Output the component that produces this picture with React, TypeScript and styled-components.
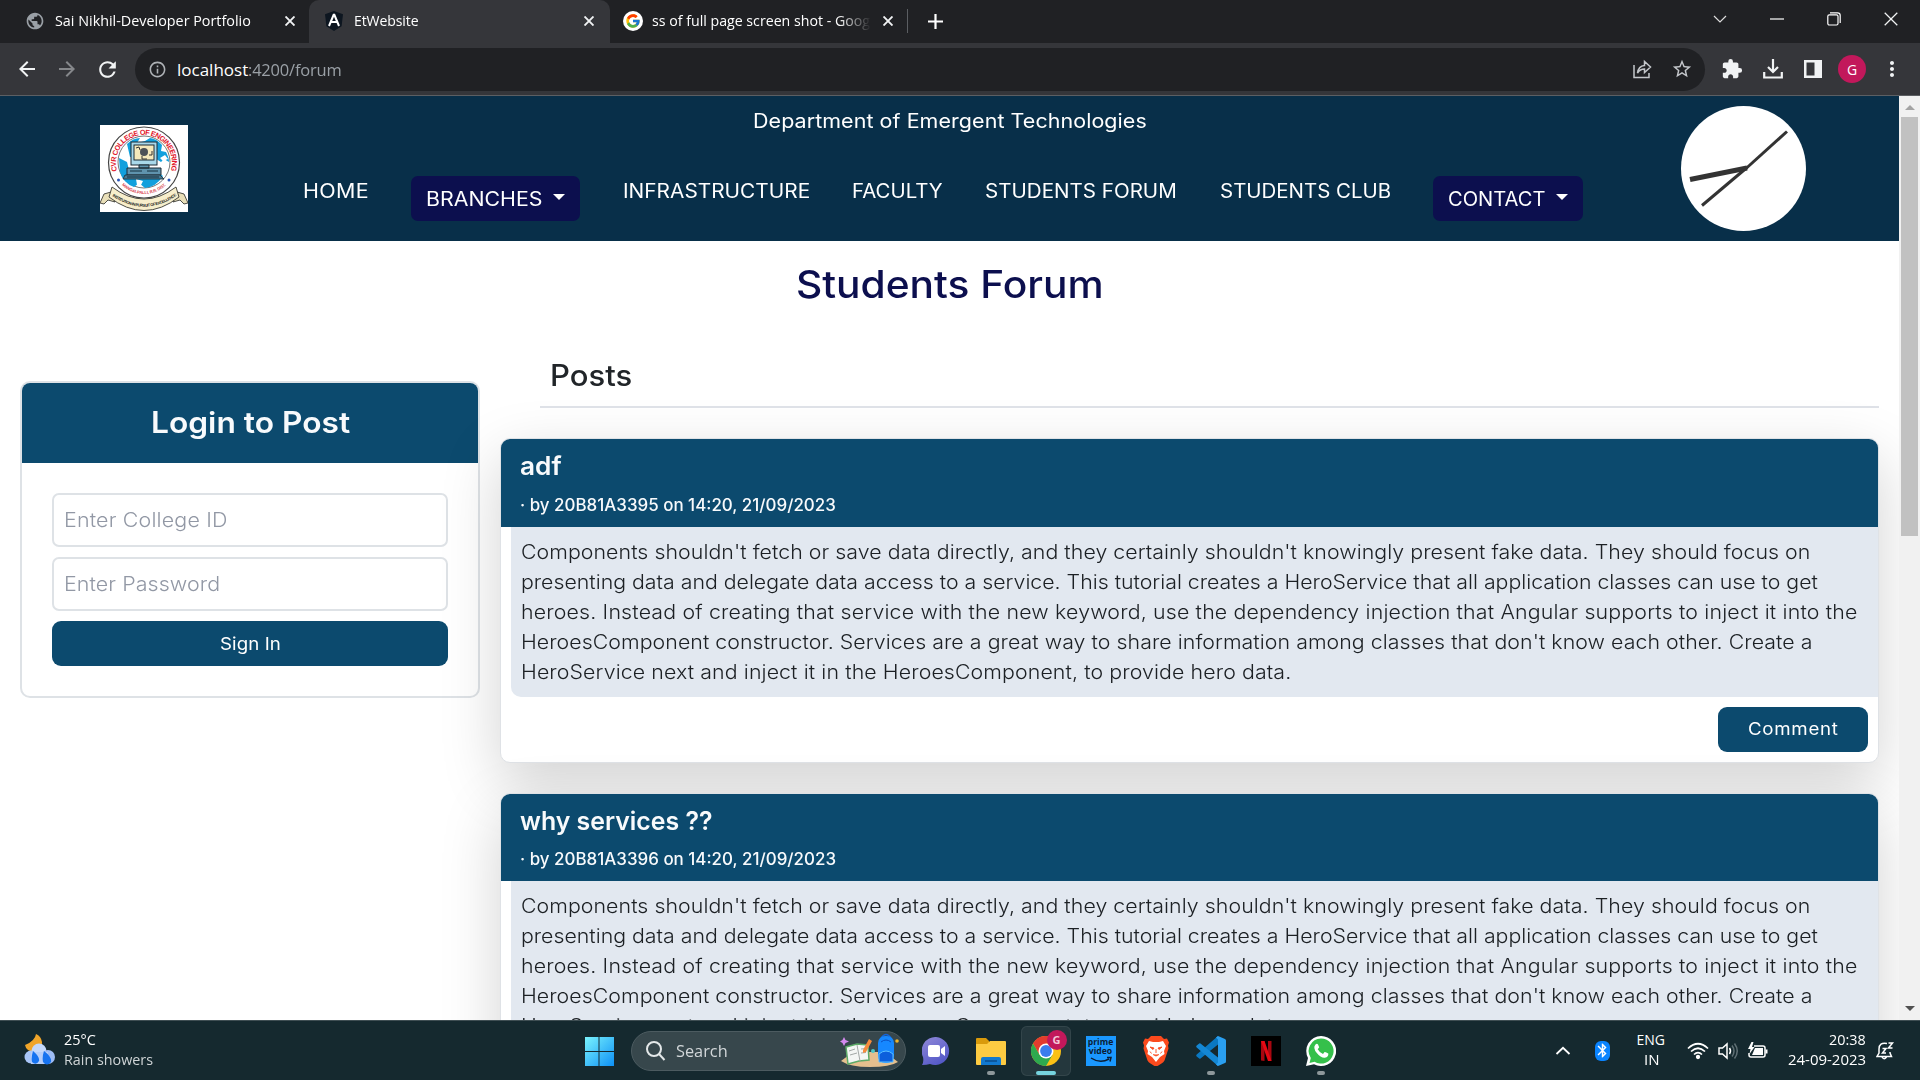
import React, { useLayoutEffect, useRef, useState } from "react";
import styled, { createGlobalStyle, css } from "styled-components";
import { FcGoogle } from "react-icons/fc";
import {
  MdArrowBack,
  MdArrowForward,
  MdRefresh,
  MdInfoOutline,
  MdStarOutline,
  MdExtension,
  MdMoreVert,
  MdPublic,
  MdBluetooth,
} from "react-icons/md";

const page = `Inter, "Open Sans", sans-serif`;
const ui = `"Open Sans", "Noto Sans", sans-serif`;

const Global = createGlobalStyle`
  * { box-sizing: border-box; }
  html, body { margin: 0; padding: 0; overflow: hidden; background: #fff; }
  h1, h2, h3, p { margin: 0; }
  button, input { font: inherit; }
  svg { display: block; flex: none; }
`;

/* ---------- text set to a measure, by glyph width first and tracking second ---------- */

const MAX_STRETCH = 1.1;

const Measure = styled.span<{ $w: number }>`
  display: inline-block;
  flex: none;
  width: ${(p) => p.$w}px;
  white-space: pre;
  text-align: left;
`;

const Glyphs = styled.span`
  display: inline-block;
  transform-origin: 0 50%;
`;

function Tracked({ w, children }: { w: number; children: string }) {
  const ref = useRef<HTMLSpanElement>(null);
  const [fit, setFit] = useState({ spacing: 0, scale: 1 });
  useLayoutEffect(() => {
    if (!ref.current) return;
    const natural = ref.current.offsetWidth;
    const scale = Math.min(MAX_STRETCH, Math.max(0.97, w / natural));
    setFit({ scale, spacing: (w / scale - natural) / Math.max(1, children.length - 1) });
  }, [w, children]);
  return (
    <Measure $w={w}>
      <Glyphs ref={ref} style={{ letterSpacing: fit.spacing, transform: `scaleX(${fit.scale})` }}>
        {children}
      </Glyphs>
    </Measure>
  );
}

/* ---------- browser chrome ---------- */

const Screen = styled.div`
  width: 1920px;
  height: 1080px;
  display: flex;
  flex-direction: column;
  overflow: hidden;
  background: #fff;
`;

const TabStrip = styled.div`
  height: 43px;
  flex: none;
  display: flex;
  background: #202124;
  color: #fff;
  font-family: ${ui};
  font-size: 14.5px;
`;

const Tab = styled.div<{ $w: number; $active?: boolean; $pad: number }>`
  width: ${(p) => p.$w}px;
  height: 43px;
  padding: 0 ${(p) => p.$pad}px 1px 0;
  display: flex;
  align-items: center;
  border-radius: 10px 10px 0 0;
  background: ${(p) => (p.$active ? "#35363a" : "transparent")};
`;

const TabIcon = styled.span<{ $left: number; $right: number }>`
  display: flex;
  margin: 0 ${(p) => p.$right}px 0 ${(p) => p.$left}px;
`;

const TabTitle = styled.span<{ $fade?: boolean; $w?: number }>`
  flex: ${(p) => (p.$w ? "none" : 1)};
  width: ${(p) => (p.$w ? `${p.$w}px` : "auto")};
  overflow: hidden;
  white-space: nowrap;
  line-height: 24px;
  ${(p) =>
    p.$fade &&
    css`
      mask-image: linear-gradient(90deg, #000 85%, transparent 100%);
    `}
`;

const TabDivider = styled.span`
  width: 1px;
  height: 24px;
  margin: 9px 0 0 14px;
  background: #5b5e62;
`;

const NewTab = styled.span`
  display: flex;
  margin: 14px 0 0 20px;
`;

const WindowButtons = styled.div`
  margin-left: auto;
  display: flex;
  height: 38px;
  align-items: center;
  padding-right: 22px;
  gap: 43px;
`;

const Toolbar = styled.div`
  height: 53px;
  flex: none;
  display: flex;
  align-items: center;
  padding: 0 0 0 15px;
  background: #35363a;
  border-bottom: 1px solid #5c5f63;
  color: #f1f3f4;
  font-family: ${ui};
`;

const NavButtons = styled.div`
  display: flex;
  width: 120px;
  gap: 16px;
`;

const Omnibox = styled.div`
  width: 1570px;
  height: 43px;
  display: flex;
  align-items: center;
  padding: 0 12px 0 13px;
  border-radius: 22px;
  background: #202124;
  font-size: 17px;
  color: #9aa0a6;
`;

const Url = styled.span`
  margin-left: 10px;
  padding-top: 1px;
  display: flex;
  flex: 1;
  line-height: 24px;
  b {
    font-weight: 400;
    color: #fff;
  }
`;

const OmniActions = styled.span`
  display: flex;
  align-items: center;
  gap: 19px;
  color: #c4c7cb;
`;

const ToolActions = styled.div`
  display: flex;
  align-items: center;
  padding-left: 16px;
  gap: 20px;
`;

const Avatar = styled.span`
  width: 28px;
  height: 28px;
  margin: 0 -6px 0 -5px;
  border-radius: 50%;
  background: #c2185b;
  color: #fff;
  display: flex;
  align-items: center;
  justify-content: center;
  font: 400 14px ${ui};
`;

/* ---------- site ---------- */

const Viewport = styled.div`
  height: 924px;
  flex: none;
  display: flex;
  overflow: hidden;
`;

const Site = styled.div`
  width: 1899px;
  flex: none;
  overflow: hidden;
  font-family: ${page};
  color: #212529;
`;

const SiteHeader = styled.header`
  height: 145px;
  display: grid;
  grid-template-columns: 303px 1280px 316px;
  background: #082f49;
  color: #fff;
`;

const LogoCell = styled.div`
  padding: 29px 0 0 100px;
`;

const HeaderCenter = styled.div`
  font-size: 19.5px;
`;

const Department = styled.div`
  padding: 10px 0 0 13px;
  line-height: 30px;
  text-align: center;
`;

const Menu = styled.nav`
  display: flex;
  gap: 42.4px;
  margin-top: 40px;
  height: 45px;
`;

const MenuLink = styled.a`
  line-height: 30px;
`;

const MenuButton = styled.button<{ $w: number }>`
  width: ${(p) => p.$w}px;
  height: 45px;
  padding: 0 0 0 15px;
  display: flex;
  align-items: center;
  border: 0;
  border-radius: 7px;
  background: #0c0f4e;
  color: #fff;
`;

const Caret = styled.span`
  margin: -4px 0 0 11px;
  border: 6px solid transparent;
  border-top-color: #fff;
  border-bottom: 0;
`;

const ClockCell = styled.div`
  padding: 10px 0 0 98px;
`;

const PageTitle = styled.h1`
  padding-top: 19px;
  height: 98px;
  text-align: center;
  font-weight: 500;
  font-size: 37.5px;
  line-height: 50px;
  color: #0c0f4e;
`;

const Columns = styled.div`
  display: flex;
  align-items: flex-start;
`;

const LoginCard = styled.section`
  width: 460px;
  height: 317px;
  flex: none;
  margin: 42px 0 0 20px;
  border: 2px solid #dee2e6;
  border-radius: 10px;
  overflow: hidden;
`;

const LoginTitle = styled.h2`
  height: 80px;
  display: flex;
  align-items: center;
  justify-content: center;
  padding-bottom: 2px;
  background: #0c4a6e;
  color: #f8fafc;
  font-size: 29.5px;
  font-weight: 600;
`;

const LoginForm = styled.form`
  padding: 30px;
  display: flex;
  flex-direction: column;
  gap: 10px;
`;

const Field = styled.label`
  height: 54px;
  padding: 0 10px;
  display: flex;
  align-items: center;
  border: 2px solid #dee2e6;
  border-radius: 7px;
  font-size: 19.5px;
  font-weight: 300;
  color: #9298a5;
`;

const SolidButton = styled.button<{ $w?: number }>`
  width: ${(p) => (p.$w ? `${p.$w}px` : "100%")};
  height: 45px;
  padding: 0;
  border: 0;
  border-radius: 9px;
  background: #0c4a6e;
  color: #fff;
  font-size: 17px;
`;

const Posts = styled.main`
  width: 1379px;
  margin-left: 20px;
  padding-top: 16px;
`;

const PostsHeading = styled.h2`
  margin-left: 40px;
  height: 53px;
  padding-left: 10px;
  border-bottom: 2px solid #dfe2e8;
  font-size: 29.5px;
  line-height: 40px;
  font-weight: 500;
`;

const PostCard = styled.article`
  height: 324.600px;
  margin: 30px 0 0;
  border: 1px solid #dfe2e6;
  border-radius: 10px;
  background: #fff;
  overflow: hidden;
  box-shadow: 0 20px 60px rgba(0, 0, 0, 0.175);
`;

const PostHead = styled.div`
  height: 87.600px;
  padding: 10px 0 0 19px;
  background: #0c4a6e;
  color: #f8fafc;
`;

const PostTitle = styled.h3`
  font-size: 25px;
  font-weight: 600;
  line-height: 34px;
`;

const PostMeta = styled.div`
  margin-top: 8.600px;
  font-size: 16.8px;
  font-weight: 500;
  line-height: 26px;
`;

const PostBody = styled.div`
  height: 170px;
  margin-left: 10px;
  padding: 10px 0 0 10px;
  display: flex;
  flex-direction: column;
  background: #e2e8f0;
  border-radius: 0 0 0 10px;
  font-size: 19.4px;
  font-weight: 300;
  line-height: 30px;
  color: #1c2024;
`;

const PostActions = styled.div`
  display: flex;
  justify-content: flex-end;
  padding: 10px 10px 0 0;
`;

const Scrollbar = styled.div`
  width: 21px;
  display: flex;
  flex-direction: column;
  align-items: center;
  justify-content: space-between;
  background: #f1f1f1;
`;

const ScrollTop = styled.div`
  display: flex;
  flex-direction: column;
  align-items: center;
`;

const Arrow = styled.span<{ $down?: boolean }>`
  margin: ${(p) => (p.$down ? "0 0 9px" : "9px 0 7px")};
  border: 5px solid transparent;
  ${(p) =>
    p.$down
      ? css`
          border-top-color: #505050;
          border-bottom: 0;
        `
      : css`
          border-bottom-color: #a3a3a3;
          border-top: 0;
        `}
`;

const Thumb = styled.span`
  width: 17px;
  height: 419px;
  background: #c1c1c1;
`;

/* ---------- taskbar ---------- */

const Taskbar = styled.footer`
  height: 60px;
  flex: none;
  display: grid;
  grid-template-columns: 584px 940px 396px;
  background: #15292f;
  border-top: 1px solid #3f4e53;
  color: #fff;
  font-family: ${ui};
  font-size: 14px;
`;

const Weather = styled.div`
  display: flex;
  align-items: center;
  padding: 0 0 2px 24px;
  gap: 9px;
  line-height: 20px;
  small {
    display: block;
    font-size: 14px;
    color: #cfd4d6;
  }
`;

const Apps = styled.div`
  display: flex;
  align-items: center;
`;

const Search = styled.div`
  width: 275px;
  height: 40px;
  margin: 0 2px 0 17px;
  padding: 0 6px 0 12px;
  display: flex;
  align-items: center;
  border: 1px solid #4c5b60;
  border-radius: 20px;
  background: #37474c;
  font-size: 16px;
  color: #d2d7d9;
  svg:last-child {
    margin-left: auto;
  }
`;

const SearchLabel = styled.span`
  margin-left: 8px;
`;

const AppTile = styled.div<{ $active?: boolean }>`
  position: relative;
  width: 50px;
  height: 50px;
  margin: 0 2.5px;
  display: flex;
  align-items: center;
  justify-content: center;
  border-radius: 6px;
  ${(p) =>
    p.$active &&
    css`
      background: #24373d;
      box-shadow: inset 0 0 0 1px #33454a;
    `}
`;

const Indicator = styled.span<{ $active?: boolean }>`
  position: absolute;
  bottom: 1px;
  width: ${(p) => (p.$active ? 20 : 8)}px;
  height: 4px;
  border-radius: 2px;
  background: ${(p) => (p.$active ? "#76d3de" : "#8e989b")};
`;

const AppBadge = styled.span`
  position: absolute;
  left: 26px;
  top: 4px;
  width: 20px;
  height: 20px;
  border-radius: 50%;
  background: #c2185b;
  color: #f3c6d8;
  font-size: 11px;
  font-weight: 700;
  line-height: 20px;
  text-align: center;
`;

const Prime = styled.span`
  width: 30px;
  height: 30px;
  padding-top: 2px;
  display: flex;
  flex-direction: column;
  align-items: center;
  background: #1a98ff;
  color: #0b1d33;
  font-size: 8.6px;
  font-weight: 700;
  line-height: 9px;
`;

const Netflix = styled.span`
  width: 30px;
  height: 30px;
  display: flex;
  align-items: center;
  justify-content: center;
  background: #000;
`;

const Tray = styled.div`
  display: flex;
  align-items: center;
  padding-left: 31px;
`;

const Bluetooth = styled.span`
  width: 15px;
  height: 20px;
  margin-left: 24px;
  display: flex;
  align-items: center;
  justify-content: center;
  border-radius: 6px;
  background: #0a84ff;
`;

const TrayText = styled.div<{ $w: number; $left: number; $align: string }>`
  width: ${(p) => p.$w}px;
  margin-left: ${(p) => p.$left}px;
  padding-bottom: 1px;
  display: flex;
  flex-direction: column;
  align-items: ${(p) => p.$align};
  line-height: 20px;
`;

const TrayIcons = styled.div`
  display: flex;
  align-items: center;
  margin-left: 21px;
  gap: 8.500px;
`;

const Bell = styled.svg`
  margin-left: 10px;
`;

/* ---------- drawings ---------- */

const CloseIcon = ({ s = 10, t = 1.9 }: { s?: number; t?: number }) => (
  <svg width={s} height={s} viewBox="0 0 10 10" stroke="#f1f3f4" strokeWidth={t}>
    <path d="M.5.5l9 9M9.5.5l-9 9" />
  </svg>
);

const AngularIcon = () => (
  <svg width="20" height="20" viewBox="0 0 20 20">
    <path d="M10 0l9 3.3-1.4 12L10 20l-7.600-4.700L1 3.300z" fill="#0d1620" />
    <path d="M10 3L5 15M10 3l5 12M7 11h6" stroke="#fff" strokeWidth="2" fill="none" />
  </svg>
);

const CollegeLogo = () => (
  <svg width="88" height="87" viewBox="0 0 88 87">
    <rect width="88" height="87" fill="#fff" />
    <circle cx="44" cy="37.500" r="35.500" fill="#fff" stroke="#444" strokeWidth="1.200" />
    <circle cx="44" cy="37" r="26" fill="#fff" stroke="#555" strokeWidth=".8" />
    <path d="M27 19q6-6 13-6l-3 5 8-2 5-3q7 1 12 7l-1 6 5 1q3 6 3 10l-5-3-3 3-8-5H30z" fill="#12a0dd" />
    <path d="M19 33l8 4 2 8 6 3h24l4 3q-7 11-18 12l-6-5-5 4q-11-4-14-15z" fill="#12a0dd" />
    <path d="M36 54l7 2-3 6-3-2zM60 33l5-3 3 4-5 2z" fill="#fff" />
    <rect x="31" y="17" width="26" height="23" fill="#a9d8ea" stroke="#1c2b35" strokeWidth="1" />
    <rect x="34" y="20" width="20" height="15" fill="#f5e9bb" stroke="#1c2b35" strokeWidth="1" />
    <circle cx="44" cy="27" r="4" fill="#4c5156" />
    <path d="M36 23l3-1 1 3M49 30h3v-4M42 31v3h5" stroke="#333" fill="none" />
    <path d="M27 43h34v7H27zM39 40h10v3H39z" fill="#5f93ad" stroke="#1c2b35" strokeWidth="1" />
    <path d="M25 50h35l4 4H23z" fill="#487990" stroke="#1c2b35" strokeWidth=".8" />
    <path d="M30 46h12M47 46h11M27 52h32" stroke="#16303e" />
    <path id="ringTop" d="M17.200 46A28 28 0 1 1 70.800 46" fill="none" />
    <path id="ringBottom" d="M19 57A32 32 0 0 0 69 57" fill="none" />
    <text fill="#e2162a" fontFamily="Liberation Sans, sans-serif" fontWeight="700" fontSize="7.300">
      <textPath href="#ringTop" textLength="104">CVR COLLEGE OF ENGINEERING</textPath>
    </text>
    <text fill="#d8454f" fontFamily="Liberation Sans, sans-serif" fontWeight="700" fontSize="4.200">
      <textPath href="#ringBottom" startOffset="4" textLength="49">MANGALPALLI, R.R. DIST.</textPath>
    </text>
    <circle cx="18.500" cy="55" r="1.500" fill="#2a56b8" />
    <circle cx="69" cy="55" r="1.500" fill="#2a56b8" />
    <path d="M0 78l4-9 7-2 4 10-7-2-4 4zM88 78l-4-9-7-2-4 10 7-2 4 4z" fill="#e9dfb8" stroke="#3a3a34" strokeWidth=".9" />
    <path d="M12 62q32 24 64 0l3 10q-35 27-70 0z" fill="#f7eecb" stroke="#3a3a34" strokeWidth=".9" />
    <path id="ribbon" d="M11.500 70.500Q44 93 76.500 70.500" fill="none" />
    <text fill="#222" fontFamily="Liberation Sans, sans-serif" fontWeight="700" fontSize="4">
      <textPath href="#ribbon" textLength="69" startOffset="1">INSTITUTION IN PURSUIT OF EXCELLENCE</textPath>
    </text>
  </svg>
);

const Clock = () => (
  <svg width="125" height="125" viewBox="0 0 125 125">
    <circle cx="62.500" cy="62.500" r="62.500" fill="#fff" />
    <path d="M106 25.500L65 62.500" stroke="#333" strokeWidth="3" />
    <path d="M66 61.500L21 99.500" stroke="#333" strokeWidth="3" />
    <path d="M66 62L9 73.500" stroke="#333" strokeWidth="5" />
  </svg>
);

const WeatherIcon = () => (
  <svg width="31" height="31" viewBox="0 0 31 31">
    <path d="M12 0q-1 7-11 11 1 6 9 7 9-4 8-10-1-6-6-8z" fill="#f0a52a" />
    <circle cx="15" cy="17" r="7.500" fill="#c3d8fb" />
    <circle cx="7" cy="23" r="6.500" fill="#a9c6f8" />
    <circle cx="24" cy="23" r="7" fill="#9dbcf5" />
    <rect x="7" y="18" width="17" height="12" fill="#b4cdf9" />
    <path d="M9 17q7 6 6 10-3 5-7 1-1-4 1-11zM20 17q8 6 7 11-4 5-8 0-1-5 1-11z" fill="#1673f0" />
  </svg>
);

const WindowsIcon = () => (
  <svg width="30" height="30" viewBox="0 0 30 30">
    <defs>
      <linearGradient id="win" x2="1" y2="1">
        <stop stopColor="#7af3fd" />
        <stop offset="1" stopColor="#0d90f5" />
      </linearGradient>
    </defs>
    <path d="M1 1h13.500v14H1zM15.500 1H30v14H15.500zM1 16h13.500v14H1zM15.500 16H30v14H15.500z" fill="url(#win)" />
  </svg>
);

const StudyIcon = () => (
  <svg width="60" height="36" viewBox="0 0 60 36">
    <path d="M2 28l12-9h32l13 10q-8 5-28 5T2 28z" fill="#e5bf8e" />
    <path d="M7 14l11-3 11 1 1 15-10 1-11 3z" fill="#f4f6f4" stroke="#5daa68" strokeWidth="1.500" />
    <path d="M18 12l3 16M10 18l6-2M11 22l7-2M22 16l5-.500M22 20l5-.500" stroke="#a3a8a6" />
    <path d="M24 17l6-11 3 2-6 11-3 1z" fill="#f58b3c" />
    <path d="M42 5q5-7 10 0" fill="none" stroke="#1564d8" strokeWidth="1.500" />
    <rect x="39" y="3" width="16" height="27" rx="7" fill="#1688ff" />
    <path d="M42 9q5-4 10 0" fill="none" stroke="#0b4fc0" />
    <path d="M40 21q7-6 14 0v8H40z" fill="#0c5fdc" stroke="#5cc0ff" />
    <path d="M5 4l1.500 3L10 8.500 6.500 10 5 13l-1.500-3L1 8.500 3.500 7z" fill="#d58af0" />
    <circle cx="34" cy="18" r="2" fill="#4cc8c8" />
    <circle cx="58" cy="8" r="1.800" fill="#f0b429" />
  </svg>
);

const MeetIcon = () => (
  <svg width="28" height="28" viewBox="0 0 28 28">
    <defs>
      <linearGradient id="meet" y2="1" x2=".6">
        <stop stopColor="#9189d8" />
        <stop offset="1" stopColor="#5459c8" />
      </linearGradient>
    </defs>
    <path d="M14 0a14 14 0 1 1-6 27q-3 1-8 1 2-3 1-8A14 14 0 0 1 14 0z" fill="url(#meet)" />
    <rect x="6" y="8" width="12" height="12" rx="2" fill="#fff" />
    <path d="M19 12l4-3v10l-4-3z" fill="#fff" />
  </svg>
);

const FolderIcon = () => (
  <svg width="30" height="28" viewBox="0 0 30 28">
    <path d="M0 2q0-1 1-1h9l3 3v4H0z" fill="#d99a0b" />
    <path d="M0 7h11l3-3h15q1 0 1 1v22q0 1-1 1H1q-1 0-1-1z" fill="#fdcb42" />
    <path d="M5 28v-6q0-2 2-2h16q2 0 2 2v6z" fill="#1279cf" />
    <path d="M9 24h12" stroke="#0a4c8c" strokeWidth="1.500" />
  </svg>
);

const ChromeIcon = () => (
  <svg width="30" height="30" viewBox="0 0 30 30">
    <circle cx="15" cy="15" r="15" fill="#fbc116" />
    <path d="M2 7.500A15 15 0 0 1 28 7.500H15L8.500 18.750z" fill="#e33b2e" />
    <path d="M2 7.500a15 15 0 0 0 13 22.500l6.500-11.250h-13z" fill="#2da94f" />
    <circle cx="15" cy="15" r="7.500" fill="#fff" />
    <circle cx="15" cy="15" r="5.900" fill="#3b7ded" />
  </svg>
);

const BraveIcon = () => (
  <svg width="26" height="30" viewBox="0 0 26 30">
    <path d="M8 0h10l3 3 3-.5 2 4-1 3 .5 3-4 12q-1 2-3 3l-5.500 3.500L7.500 27.500q-2-1-3-3l-4-12 .5-3-1-3 2-4L5 3z" fill="#fb4a1d" />
    <path d="M6 5l4 1h6l4-1 3 5-2 5 .5 3-4.500 3L13 26l-4-5-4.500-3 .5-3-2-5z" fill="#fff" />
    <path d="M7 11l4 1-1 1.500zM19 11l-4 1 1 1.500zM13 13v4M10 18.500l3 1.500 3-1.500M7 15.500l1.500 2M19 15.500l-1.500 2" fill="#fb4a1d" stroke="#fb4a1d" strokeWidth=".9" />
  </svg>
);

const CodeIcon = () => (
  <svg width="30" height="30" viewBox="0 0 30 30">
    <path d="M22 0v8.500L4.500 22.500q-.7.500-1.300 0l-2.500-2q-1-1 0-2z" fill="#0a78c2" />
    <path d="M22 30v-8.500L4.500 7.500q-.7-.5-1.300 0l-2.500 2q-1 1 0 2z" fill="#1487d4" />
    <path d="M22 0l7 3q1 .5 1 1.500v21q0 1-1 1.500l-7 3-2-1.500 2-2V3.500l-2-2z" fill="#2a9ff0" />
  </svg>
);

const WhatsIcon = () => (
  <svg width="30" height="30" viewBox="0 0 30 30">
    <path d="M15 0a15 15 0 1 1-7 28.200L0 30l2-8A15 15 0 0 1 15 0z" fill="#fff" />
    <path d="M15 2.400a12.600 12.600 0 1 1-6.500 23.400L3.500 27l1.300-5A12.600 12.600 0 0 1 15 2.400z" fill="#35c04b" />
    <path d="M9.500 8.500q1.500-1.500 2.500 0l1.200 2.700-1.500 2q2 3.500 5.300 4.800l1.600-2q1-.3 3.700 1.500.5 3.500-3.500 4.200-4 .3-8-4.700-4.300-5-1.300-8.500z" fill="#fff" />
  </svg>
);

/* ---------- data ---------- */

const bodyLines: [string, number][] = [
  ["Components shouldn't fetch or save data directly, and they certainly shouldn't knowingly present fake data. They should focus on", 1289],
  ["presenting data and delegate data access to a service. This tutorial creates a HeroService that all application classes can use to get", 1297],
  ["heroes. Instead of creating that service with the new keyword, use the dependency injection that Angular supports to inject it into the", 1336],
  ["HeroesComponent constructor. Services are a great way to share information among classes that don't know each other. Create a", 1292],
  ["HeroService next and inject it in the HeroesComponent, to provide hero data.", 770],
];

const posts = [
  { title: "adf", titleW: 42, meta: "· by 20B81A3395 on 14:20, 21/09/2023" },
  { title: "why services ??", titleW: 192, meta: "· by 20B81A3396 on 14:20, 21/09/2023" },
];

export default function App() {
  return (
    <Screen>
      <Global />
      <TabStrip>
        <Tab $w={309} $pad={14}>
          <TabIcon $left={25} $right={10}><MdPublic size={20} color="#9aa0a6" /></TabIcon>
          <TabTitle><Tracked w={196}>Sai Nikhil-Developer Portfolio</Tracked></TabTitle>
          <CloseIcon />
        </Tab>
        <Tab $w={301} $pad={16} $active>
          <TabIcon $left={15} $right={10}><AngularIcon /></TabIcon>
          <TabTitle><Tracked w={65}>EtWebsite</Tracked></TabTitle>
          <CloseIcon />
        </Tab>
        <Tab $w={283} $pad={0}>
          <TabIcon $left={13} $right={9}>
            <svg width="20" height="20" viewBox="0 0 20 20">
              <circle cx="10" cy="10" r="10" fill="#fff" />
              <FcGoogle x={2} y={2} width={16} height={16} size={16} />
            </svg>
          </TabIcon>
          <TabTitle $fade $w={219}><Tracked w={218}>ss of full page screen shot - Goog</Tracked></TabTitle>
          <TabIcon $left={12} $right={0}><CloseIcon /></TabIcon>
        </Tab>
        <TabDivider />
        <NewTab>
          <svg width="15" height="15" viewBox="0 0 15 15" stroke="#fff" strokeWidth="2.200"><path d="M7.500 0v15M0 7.500h15" /></svg>
        </NewTab>
        <WindowButtons>
          <svg width="14" height="8" viewBox="0 0 14 8" fill="none" stroke="#ddd" strokeWidth="1.200"><path d="M1 1l6 6 6-6" /></svg>
          <svg width="14" height="2" viewBox="0 0 14 2"><path d="M0 1h14" stroke="#fff" strokeWidth="1.200" /></svg>
          <svg width="14" height="14" viewBox="0 0 14 14" fill="none" stroke="#fff" strokeWidth="1.200">
            <rect x=".8" y="2.800" width="10.200" height="10.200" rx="1.500" /><path d="M3 .8h7.500q2.700 0 2.700 2.700V11" />
          </svg>
          <CloseIcon s={14} t={0.9} />
        </WindowButtons>
      </TabStrip>

      <Toolbar>
        <NavButtons>
          <MdArrowBack size={24} />
          <MdArrowForward size={24} color="#86888b" />
          <MdRefresh size={25} />
        </NavButtons>
        <Omnibox>
          <MdInfoOutline size={19} color="#aeb2b6" />
          <Url>
            <b><Tracked w={71}>localhost</Tracked></b>
            <Tracked w={94}>:4200/forum</Tracked>
          </Url>
          <OmniActions>
            <svg width="20" height="20" viewBox="0 0 20 20" fill="none" stroke="currentColor" strokeWidth="1.500">
              <path d="M2 6v12.500h15V14" /><path d="M5.500 14q1-7 7-7.500V2.500L18.500 8l-6 5.500V10q-4.500 0-7 4z" />
            </svg>
            <MdStarOutline size={22} />
          </OmniActions>
        </Omnibox>
        <ToolActions>
          <MdExtension size={22} />
          <svg width="20" height="20" viewBox="0 0 20 20" fill="none" stroke="currentColor" strokeWidth="2.200">
            <path d="M10 0v12M5 8l5 5 5-5M1.200 13v5.500h17.600V13" />
          </svg>
          <svg width="20" height="20" viewBox="0 0 20 20"><path fillRule="evenodd" d="M1 1h18v18H1zM3.500 3.500v13h8v-13z" fill="currentColor" /></svg>
          <Avatar>G</Avatar>
          <MdMoreVert size={24} />
        </ToolActions>
      </Toolbar>

      <Viewport>
        <Site>
          <SiteHeader>
            <LogoCell><CollegeLogo /></LogoCell>
            <HeaderCenter>
              <Department><Tracked w={394}>Department of Emergent Technologies</Tracked></Department>
              <Menu>
                <MenuLink><Tracked w={66}>HOME</Tracked></MenuLink>
                <MenuButton $w={169}><Tracked w={116}>BRANCHES</Tracked><Caret /></MenuButton>
                <MenuLink><Tracked w={187}>INFRASTRUCTURE</Tracked></MenuLink>
                <MenuLink><Tracked w={91}>FACULTY</Tracked></MenuLink>
                <MenuLink><Tracked w={192}>STUDENTS FORUM</Tracked></MenuLink>
                <MenuLink><Tracked w={171}>STUDENTS CLUB</Tracked></MenuLink>
                <MenuButton $w={150}><Tracked w={97}>CONTACT</Tracked><Caret /></MenuButton>
              </Menu>
            </HeaderCenter>
            <ClockCell><Clock /></ClockCell>
          </SiteHeader>

          <PageTitle><Tracked w={308}>Students Forum</Tracked></PageTitle>

          <Columns>
            <LoginCard>
              <LoginTitle><Tracked w={199}>Login to Post</Tracked></LoginTitle>
              <LoginForm>
                <Field><Tracked w={163}>Enter College ID</Tracked></Field>
                <Field><Tracked w={156}>Enter Password</Tracked></Field>
                <SolidButton type="button"><Tracked w={61}>Sign In</Tracked></SolidButton>
              </LoginForm>
            </LoginCard>
            <Posts>
              <PostsHeading><Tracked w={82}>Posts</Tracked></PostsHeading>
              {posts.map((post) => (
                <PostCard key={post.title}>
                  <PostHead>
                    <PostTitle><Tracked w={post.titleW}>{post.title}</Tracked></PostTitle>
                    <PostMeta><Tracked w={316}>{post.meta}</Tracked></PostMeta>
                  </PostHead>
                  <PostBody>
                    {bodyLines.map(([line, w]) => <Tracked key={line} w={w}>{line}</Tracked>)}
                  </PostBody>
                  <PostActions>
                    <SolidButton type="button" $w={150}><Tracked w={90}>Comment</Tracked></SolidButton>
                  </PostActions>
                </PostCard>
              ))}
            </Posts>
          </Columns>
        </Site>
        <Scrollbar>
          <ScrollTop><Arrow /><Thumb /></ScrollTop>
          <Arrow $down />
        </Scrollbar>
      </Viewport>

      <Taskbar>
        <Weather>
          <WeatherIcon />
          <div><Tracked w={32}>25°C</Tracked><small><Tracked w={89}>Rain showers</Tracked></small></div>
        </Weather>
        <Apps>
          <WindowsIcon />
          <Search>
            <svg width="24" height="24" viewBox="0 0 24 24" fill="none" stroke="#e4e8e9" strokeWidth="2">
              <circle cx="10" cy="10" r="7" /><path d="M15 15l5.500 6" />
            </svg>
            <SearchLabel><Tracked w={52}>Search</Tracked></SearchLabel>
            <StudyIcon />
          </Search>
          <AppTile><MeetIcon /></AppTile>
          <AppTile><FolderIcon /><Indicator /></AppTile>
          <AppTile $active><ChromeIcon /><AppBadge>G</AppBadge><Indicator $active /></AppTile>
          <AppTile>
            <Prime>
              <span>prime</span>
              <span>video</span>
              <svg width="30" height="8" viewBox="0 0 30 8" fill="none" stroke="#0b1d33" strokeWidth="1.500"><path d="M5 2q9 6 18 1M21 1.500h4l-1 4" /></svg>
            </Prime>
          </AppTile>
          <AppTile><BraveIcon /></AppTile>
          <AppTile><CodeIcon /><Indicator /></AppTile>
          <AppTile>
            <Netflix>
              <svg width="12" height="20" viewBox="0 0 12 20">
                <path d="M1 0h3.500v20L1 19.500zM8 0h3.500v20L8 19.500z" fill="#a80710" /><path d="M1 0h3.500l7 20H8z" fill="#e50914" />
              </svg>
            </Netflix>
          </AppTile>
          <AppTile><WhatsIcon /><Indicator /></AppTile>
        </Apps>
        <Tray>
          <svg width="16" height="10" viewBox="0 0 16 10" fill="none" stroke="#fff" strokeWidth="1.800"><path d="M1.500 8L8 1.800 14.500 8" /></svg>
          <Bluetooth><MdBluetooth size={17} color="#fff" /></Bluetooth>
          <TrayText $w={30} $left={26} $align="center">
            <Tracked w={29}>ENG</Tracked><Tracked w={15}>IN</Tracked>
          </TrayText>
          <TrayIcons>
            <svg width="22" height="18" viewBox="0 0 22 18" fill="none" stroke="#fff" strokeWidth="1.700">
              <path d="M1 6.500q10-9.500 20 0M4 9.500q7-6.500 14 0M7 12.500q4-3.700 8 0" /><circle cx="11" cy="15" r="1.300" fill="#fff" />
            </svg>
            <svg width="21" height="18" viewBox="0 0 21 18" fill="none" stroke="#fff" strokeWidth="1.500">
              <path d="M1 6v6h3.500L9 16V2L4.500 6zM11.500 6q2 3 0 6" /><path d="M14 3.500q4 5.500 0 11M16.500 1.500q5.500 7.500 0 15" stroke="#5f6f74" />
            </svg>
            <svg width="21" height="18" viewBox="0 0 21 18" fill="none" stroke="#fff" strokeWidth="1.500">
              <path d="M7 4h9q2 0 2 2v7q0 2-2 2H4q-2 0-2-2v-2" /><path d="M8 6h8v7H5z" fill="#fff" stroke="none" /><path d="M19.500 7.500v4" strokeWidth="2" />
              <path d="M4.500 0L1 7h2.500l-1 5L7.500 5H5L6.500 0z" fill="#fff" stroke="none" />
            </svg>
          </TrayIcons>
          <TrayText $w={90} $left={8} $align="flex-end">
            <Tracked w={37}>20:38</Tracked><Tracked w={78}>24-09-2023</Tracked>
          </TrayText>
          <Bell width="19" height="20" viewBox="0 0 19 20" fill="none" stroke="#fff" strokeWidth="1.500">
            <path d="M11 2.500Q3 1 3 8v4l-2 3.500h14.500L14 12v-1M6 16q2 3.500 4.500 0M12.500 2h4l-4 5h4M6.500 7.500h3.500l-3.500 4.500H10" />
          </Bell>
        </Tray>
      </Taskbar>
    </Screen>
  );
}
